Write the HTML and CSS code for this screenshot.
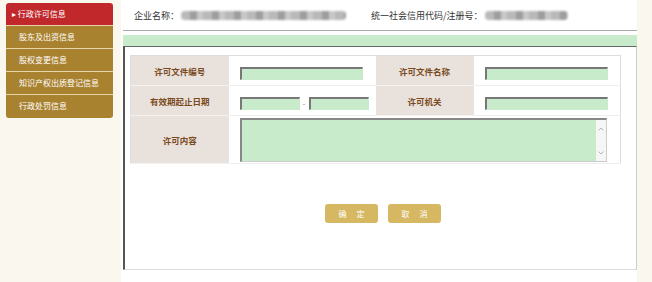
FILE: index.html
```html
<!DOCTYPE html>
<html lang="zh-CN">
<head>
  <meta charset="UTF-8" />
  <title>行政许可信息</title>
  <link rel="stylesheet" href="styles.css">
</head>
<body>
  <div class="page">
    <!-- Left menu -->
    <ul class="side-menu">
      <li class="menu-item active">&#9656; 行政许可信息</li>
      <li class="menu-item">股东及出资信息</li>
      <li class="menu-item">股权变更信息</li>
      <li class="menu-item">知识产权出质登记信息</li>
      <li class="menu-item">行政处罚信息</li>
    </ul>

    <div class="main">
      <div class="company-bar">
        <span class="field-name">企业名称：</span>
        <span class="masked masked-name"></span>
        <span class="field-name code-name">统一社会信用代码/注册号：</span>
        <span class="masked masked-code"></span>
      </div>

      <div class="green-strip"></div>

      <div class="form-box">
        <table class="info-table">
          <colgroup>
            <col class="col-label" />
            <col class="col-value" />
            <col class="col-label" />
            <col class="col-value" />
          </colgroup>
          <tr class="row-short">
            <th>许可文件编号</th>
            <td><input type="text" class="txt" /></td>
            <th>许可文件名称</th>
            <td><input type="text" class="txt" /></td>
          </tr>
          <tr class="row-short">
            <th>有效期起止日期</th>
            <td>
              <input type="text" class="txt date" /><span class="dash">-</span><input type="text" class="txt date" />
            </td>
            <th>许可机关</th>
            <td><input type="text" class="txt" /></td>
          </tr>
          <tr class="row-tall">
            <th>许可内容</th>
            <td colspan="3">
              <div class="area-wrap">
                <textarea class="area"></textarea>
                <!-- fake scrollbar arrows -->
                <div class="scroll-track">
                  <svg viewBox="0 0 6 4" class="arrow"><path d="M0.5 3.5L3 1l2.5 2.5" /></svg>
                  <svg viewBox="0 0 6 4" class="arrow"><path d="M0.5 0.5L3 3l2.5-2.5" /></svg>
                </div>
              </div>
            </td>
          </tr>
        </table>

        <div class="actions">
          <button type="button" class="btn">确 定</button>
          <button type="button" class="btn">取 消</button>
        </div>
      </div>
    </div>
  </div>
</body>
</html>
```

FILE: styles.css
```css
* {
  box-sizing: border-box;
  font-family: "Noto Sans CJK SC", "Noto Sans", sans-serif;
}

body {
  margin: 0;
  background: #faf7ef;
  height: 282px;
  overflow: hidden;
}

.page {
  display: flex;
  align-items: flex-start;
  height: 282px;
}

/* Side menu */
.side-menu {
  list-style: none;
  margin: 3px 0 0 6px;
  padding: 0;
  width: 107px;
  border-radius: 3px;
  overflow: hidden;
}

.menu-item {
  height: 23px;
  line-height: 22px;
  padding-left: 13px;
  font-size: 8px;
  color: #fff;
  background: #a9822f;
  border-bottom: 1px solid #e5d5a8;
}

.menu-item:last-child {
  border-bottom: none;
}

.menu-item.active {
  background: #c0282c;
  padding-left: 6px;
}

/* Main panel */
.main {
  margin-left: 8px;
  width: 516px;
  height: 282px;
  background: #fff;
  padding-left: 2px;
}

.company-bar {
  height: 31px;
  display: flex;
  align-items: center;
  padding-left: 11px;
  border-bottom: 1px solid #aaa;
  font-size: 9px;
  color: #333;
}

.masked {
  display: inline-block;
  height: 9px;
  border-radius: 4px;
  background: repeating-linear-gradient(90deg, #b9b9b9 0 9px, #9d9d9d 9px 16px, #c8c8c8 16px 22px);
  filter: blur(1.2px);
}

.masked-name {
  width: 165px;
  margin-left: 2px;
}

.code-name {
  margin-left: 25px;
}

.masked-code {
  width: 83px;
  margin-left: 2px;
}

.green-strip {
  margin-top: 4px;
  height: 11px;
  background: #c8ebcb;
}

.form-box {
  height: 224px;
  border-top: 1px solid #666;
  border-left: 2px solid #555;
  border-right: 1px solid #ccc;
  border-bottom: 1px solid #ddd;
  padding: 8px 0 0 5px;
}

/* Table */
.info-table {
  width: 491px;
  table-layout: fixed;
  border-collapse: collapse;
  border: 1px solid #ddd;
}

.col-label {
  width: 98px;
}

.col-value {
  width: 147px;
}

.info-table th {
  background: #e9e2dc;
  color: #7a4a1e;
  font-size: 8.5px;
  font-weight: bold;
  border-bottom: 1px solid #f2f2f2;
}

.info-table td {
  padding: 0 0 0 11px;
  border-bottom: 1px solid #eee;
  white-space: nowrap;
}

.row-short {
  height: 30px;
}

.row-tall {
  height: 48px;
}

.txt {
  height: 13px;
  width: 123px;
  margin: 0;
  padding: 0;
  background: #c8ebcb;
  border: 1px solid #c8ebcb;
  border-top: 2px solid #777;
  border-left: 2px solid #777;
  vertical-align: middle;
}

.txt.date {
  width: 60px;
}

.dash {
  display: inline-block;
  width: 9px;
  text-align: center;
  font-size: 8px;
  color: #888;
  vertical-align: middle;
}

.area-wrap {
  display: flex;
  width: 367px;
  height: 44px;
  border: 1px solid #ccc;
  border-top: 2px solid #888;
  border-left: 2px solid #888;
}

.area {
  flex: 1;
  margin: 0;
  padding: 0;
  background: #c8ebcb;
  border: none;
  resize: none;
  overflow: hidden;
}

.scroll-track {
  width: 10px;
  background: #f6f6f6;
  display: flex;
  flex-direction: column;
  justify-content: space-between;
  align-items: center;
  padding: 7px 0 6px;
}

.arrow {
  width: 6px;
  height: 4px;
  fill: none;
  stroke: #b5b5b5;
  stroke-width: 1;
}

/* Buttons */
.actions {
  display: flex;
  justify-content: center;
  gap: 10px;
  margin-top: 40px;
}

.btn {
  width: 53px;
  height: 19px;
  padding: 0;
  background: #d6b862;
  border: none;
  border-radius: 3px;
  color: #fff;
  font-size: 8px;
  letter-spacing: 4px;
  text-indent: 4px;
  cursor: pointer;
}
```
